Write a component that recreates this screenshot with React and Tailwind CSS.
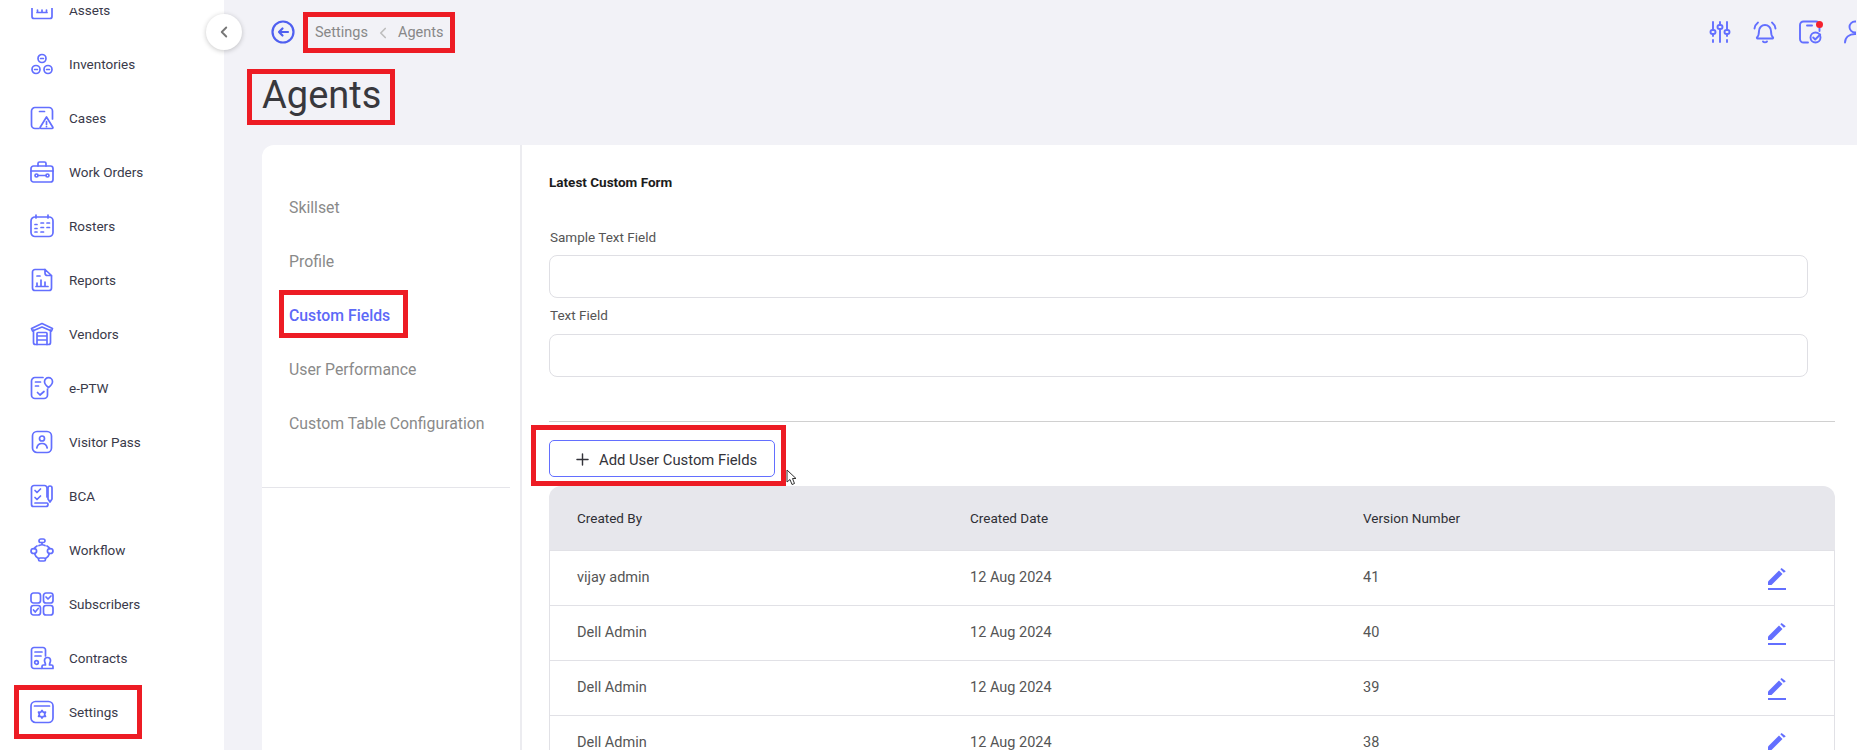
import { ChevronLeft, Plus } from "lucide-react";

const ICON = "#636fff";

// outline icons of the sidebar, all drawn on a 24 box
const Stroke = ({ children, width = 1.7 }) => (
  <svg viewBox="0 0 24 24" className="h-[24px] w-[24px] shrink-0" fill="none" stroke={ICON} strokeWidth={width} strokeLinecap="round" strokeLinejoin="round">
    {children}
  </svg>
);

const icons = {
  assets: (
    <>
      <path d="M2 -3v12.500a2 2 0 0 0 2 2h16a2 2 0 0 0 2-2V-3" transform="translate(0 9)" />
      <path d="M7 14.500h10M7.500 12v2.500M12 12v2.500M16.500 12v2.500" />
    </>
  ),
  inventories: (
    <>
      <circle cx="12" cy="6.500" r="4" />
      <circle cx="6" cy="17.500" r="4" />
      <circle cx="18" cy="17.500" r="4" />
      <path d="M10.600 6.500h2.800M4.600 17.500h2.800M16.600 17.500h2.800" />
    </>
  ),
  cases: (
    <>
      <path d="M9 22.500H5a3.500 3.500 0 0 1-3.500-3.500V5A3.500 3.500 0 0 1 5 1.500h14A3.500 3.500 0 0 1 22.500 5v8" />
      <path d="M9.500 5.500h5" />
      <path d="M16.500 11l6.300 10.300a.8.8 0 0 1-.7 1.200H10.900a.8.8 0 0 1-.7-1.200z" />
      <path d="M16.500 15.500v3M16.500 20.600v.1" />
    </>
  ),
  workOrders: (
    <>
      <rect x="1" y="6" width="22" height="16" rx="2.500" />
      <path d="M8 6V3.500A1.500 1.500 0 0 1 9.500 2h5A1.500 1.500 0 0 1 16 3.500V6M1 11h22" />
      <circle cx="6.500" cy="15.500" r="1.500" />
      <circle cx="17.500" cy="15.500" r="1.500" />
      <path d="M8 15.500h8" />
    </>
  ),
  rosters: (
    <>
      <rect x="1" y="3" width="22" height="19.500" rx="4" />
      <path d="M6 1v3M18 1v3M5 10.500h2M11 9h2.500M17 9h2.500M5 14.500h2M11 13.500h2.500M17 13.500h2.500M5 18h2M11 18h2.500" />
    </>
  ),
  reports: (
    <>
      <path d="M15 1.500H5a2.500 2.500 0 0 0-2.500 2.500v16A2.500 2.500 0 0 0 5 22.500h14a2.500 2.500 0 0 0 2.500-2.500V8" />
      <path d="M15 1.500V5a2.500 2.500 0 0 0 2.500 2.500h4z" />
      <path d="M7 18v-3M11 18v-6M15 18v-4M6 18.500h12M7 8h3" />
    </>
  ),
  vendors: (
    <>
      <path d="M3.500 8v12.500a2 2 0 0 0 2 2h13a2 2 0 0 0 2-2V8" />
      <path d="M1.500 6.500L12 1.500l10.500 5-1 2.500L12 5 2.500 9z" />
      <path d="M7 22.500V11.500a1 1 0 0 1 1-1h8a1 1 0 0 1 1 1v11M7 14h10M7 18h10" />
    </>
  ),
  eptw: (
    <>
      <path d="M13 1.500H5A3.500 3.500 0 0 0 1.500 5v14A3.500 3.500 0 0 0 5 22.500h9a3.500 3.500 0 0 0 3.500-3.500v-6" />
      <path d="M5.500 6h5M5.500 10h3M7.500 16.500l2.500 2.500 4-3.500" />
      <path d="M18.500 11.500c-2.500-2-4-3.700-4-5.800a4 4 0 0 1 8 0c0 2.100-1.500 3.800-4 5.800z" />
    </>
  ),
  visitor: (
    <>
      <rect x="2.500" y="1.500" width="19" height="21" rx="4.500" />
      <circle cx="12" cy="8.500" r="2.500" />
      <path d="M6.800 18c.5-3 2.500-4.500 5.200-4.500s4.700 1.500 5.200 4.500" />
    </>
  ),
  bca: (
    <>
      <path d="M17 13V4a2.500 2.500 0 0 0-2.500-2.500H4A2.500 2.500 0 0 0 1.500 4v16.500a2 2 0 0 0 2 2H16a2 2 0 0 0 2-2v-.5a1 1 0 0 0-1-1H5" />
      <path d="M5 6.500l2 2 3.500-3.500M5 13.500l2 2 3.500-3.500" />
      <path d="M20 18l-2-3V4a2 2 0 0 1 4 0v11z" />
    </>
  ),
  workflow: (
    <>
      <rect x="9" y="1" width="6" height="3.500" rx="1.750" />
      <rect x="8.500" y="20" width="7" height="3" rx="1.500" />
      <ellipse cx="3.800" cy="13" rx="2.800" ry="2.500" />
      <ellipse cx="20.200" cy="13" rx="2.800" ry="2.500" />
      <path d="M12 4.500v2M7 8c-1.500.8-2.500 1.800-3 2.800M17 8c1.500.8 2.500 1.800 3 2.800M9 7.500c2-1 4-1 6 0M4.500 15.500c.5 2 2 3.800 4 5M19.500 15.500c-.5 2-2 3.800-4 5" />
    </>
  ),
  subscribers: (
    <>
      <rect x="1" y="1" width="9.500" height="10" rx="2.500" />
      <rect x="13.500" y="1" width="9.500" height="10" rx="2.500" />
      <rect x="1" y="13.500" width="9.500" height="9.500" rx="2.500" />
      <rect x="13.500" y="13.500" width="9.500" height="9.500" rx="2.500" />
      <path d="M16 5l2 2 3-3M3.500 18l1.700 2 3-3.500" />
    </>
  ),
  contracts: (
    <>
      <path d="M11 22.500H4A2.500 2.500 0 0 1 1.500 20V4A2.500 2.500 0 0 1 4 1.500h9A2.500 2.500 0 0 1 15.500 4v6" />
      <path d="M5 6h7M5 10h6" />
      <circle cx="6.500" cy="16.500" r="1.800" />
      <path d="M17.500 11.500a3 3 0 0 1 3 3c0 1.500-1 2.500-1 4.500h2a1.500 1.500 0 0 1 1.500 1.500v2H12v-2a1.500 1.500 0 0 1 1.500-1.500h2c0-2-1-3-1-4.500a3 3 0 0 1 3-3z" />
    </>
  ),
  settings: (
    <>
      <rect x="1" y="1.500" width="22" height="21" rx="4.500" />
      <path d="M4.500 6h15" />
      <path d="M12 10.500l1.300 1.800 2.200-.2-.9 2.200.9 2.200-2.200-.2-1.300 1.800-1.300-1.800-2.200.2.900-2.200-.9-2.200 2.200.2z" />
    </>
  ),
};

const navItems = [
  ["Assets", "assets"],
  ["Inventories", "inventories"],
  ["Cases", "cases"],
  ["Work Orders", "workOrders"],
  ["Rosters", "rosters"],
  ["Reports", "reports"],
  ["Vendors", "vendors"],
  ["e-PTW", "eptw"],
  ["Visitor Pass", "visitor"],
  ["BCA", "bca"],
  ["Workflow", "workflow"],
  ["Subscribers", "subscribers"],
  ["Contracts", "contracts"],
  ["Settings", "settings"],
];

const tabs = ["Skillset", "Profile", "Custom Fields", "User Performance", "Custom Table Configuration"];

const rows = [
  ["vijay admin", "12 Aug 2024", "41"],
  ["Dell Admin", "12 Aug 2024", "40"],
  ["Dell Admin", "12 Aug 2024", "39"],
  ["Dell Admin", "12 Aug 2024", "38"],
];

const EditIcon = () => (
  <svg viewBox="0 0 18 22" className="h-[22px] w-[18px]" fill={ICON}>
    <path d="M0 17v-3.500L11 2.500l3.500 3.500L3.500 17z" />
    <path d="M12.300 1.300L13.600 0l4.200 3.300-2 1.500z" />
    <rect x="0" y="20" width="18" height="2" />
  </svg>
);

export default function App() {
  return (
    <div className="relative flex h-[750px] overflow-hidden bg-[#f2f2f7] font-['Roboto',sans-serif]">
      <aside className="w-[224px] shrink-0 overflow-hidden bg-white pt-[8px]">
        <div className="h-full overflow-hidden">
          <ul className="-mt-[25px]">
            {navItems.map(([label, icon]) => (
              <li key={label} className="flex h-[54px] items-center gap-[15px] pl-[30px] text-[13.500px] text-[#3a3a4a]">
                <Stroke>{icons[icon]}</Stroke>
                <span>{label}</span>
              </li>
            ))}
          </ul>
        </div>
      </aside>

      <main className="flex min-w-0 flex-1 flex-col">
        <header className="flex h-[64px] shrink-0 items-center pl-[47px]">
          <svg viewBox="0 0 24 24" className="h-[24px] w-[24px]" fill="none" stroke="#4f5ff0" strokeWidth="2.200" strokeLinecap="round" strokeLinejoin="round">
            <circle cx="12" cy="12" r="10.500" />
            <path d="M17 12H8M11.500 8.500L8 12l3.500 3.500" />
          </svg>
          <nav className="ml-[20px] flex items-center pt-[2px] text-[14.500px] text-[#888888]">
            <span>Settings</span>
            <ChevronLeft className="mx-[6px] h-[18px] w-[18px] text-[#bdbdbd]" strokeWidth={2.200} />
            <span>Agents</span>
          </nav>
          <div className="ml-auto flex items-center gap-[21px] pr-[1px]">
            <Stroke width={1.900}>
              <path d="M5 2v7M5 15v1M5 20v2M12 2v2M12 10v12M19 2v7M19 15v1M19 20v2" />
              <rect x="2.500" y="10" width="5" height="4" rx="2" />
              <rect x="9.500" y="5" width="5" height="4" rx="2" />
              <rect x="16.500" y="10" width="5" height="4" rx="2" />
            </Stroke>
            <Stroke width={1.900}>
              <path d="M4 17.500c1.500-1.500 2-3 2-6.500a6 6 0 0 1 12 0c0 3.500.5 5 2 6.500a.6.6 0 0 1-.5 1h-15a.6.6 0 0 1-.5-1z" />
              <path d="M10 21.500c1 1 3 1 4 0M1.500 8.500C2 6 3 4 5 2.500M22.500 8.500C22 6 21 4 19 2.500" />
            </Stroke>
            <div className="relative">
              <Stroke width={1.900}>
                <path d="M10 22.500H5.500A3.500 3.500 0 0 1 2 19V5a3.500 3.500 0 0 1 3.500-3.500H18A3.500 3.500 0 0 1 21.500 5v6" />
                <path d="M9 5.500h5" />
                <circle cx="17.500" cy="17.500" r="5" />
                <path d="M15.200 17.500l2 2 5-5" />
              </Stroke>
              <span className="absolute right-[-1px] top-[1px] h-[7px] w-[7px] rounded-full bg-[#f5222d]" />
            </div>
            <div className="w-[13px] overflow-hidden">
              <Stroke width={1.900}>
                <circle cx="12" cy="7" r="5.500" />
                <path d="M2 22.500c0-5 4-8.500 10-8.500s10 3.500 10 8.500" />
              </Stroke>
            </div>
          </div>
        </header>

        <h1 className="mb-[19px] flex h-[62px] shrink-0 items-center pl-[38px] text-[38px] font-normal text-[#38383d]">Agents</h1>

        <section className="ml-[38px] flex min-h-0 flex-1 rounded-tl-[12px] bg-white">
          <div className="w-[260px] shrink-0 border-r-2 border-[#ececf0]">
            <div className="mr-[10px] border-b border-[#e5e5ea] pb-[36px] pt-[36px]">
              {tabs.map((tab) => (
                <div
                  key={tab}
                  className={`flex h-[54px] items-center pl-[27px] text-[15.800px] ${tab === "Custom Fields" ? "font-medium text-[#5d69f7]" : "font-normal text-[#8a8a8a]"}`}
                >
                  {tab}
                </div>
              ))}
            </div>
          </div>

          <div className="min-w-0 flex-1 pl-[27px] pr-[22px] pt-[27px]">
            <h2 className="h-[20px] text-[13.500px] font-bold leading-[20px] text-[#1c1c1c]">Latest Custom Form</h2>

            <div className="mt-[35px] pr-[27px]">
              <label className="block pl-px text-[13.500px] leading-[20px] text-[#555555]">Sample Text Field</label>
              <div className="mt-[8px] h-[43px] rounded-[8px] border border-[#dfdfe4]" />
              <label className="mt-[7px] block pl-px text-[13.500px] leading-[20px] text-[#555555]">Text Field</label>
              <div className="mt-[9px] h-[43px] rounded-[8px] border border-[#dfdfe4]" />
            </div>

            <div className="mt-[44px] border-t border-[#d0d0d0]" />

            <button className="mt-[18px] flex h-[37px] w-[226px] items-center rounded-[5px] border border-[#636fff] pl-[23px] pt-[3px] text-[14.800px] text-[#33333a]">
              <Plus className="mb-[2px] mr-[7px] h-[19px] w-[19px]" strokeWidth={1.800} />
              Add User Custom Fields
            </button>

            <div className="mt-[9px] overflow-hidden rounded-t-[12px]">
              <div className="grid h-[65px] grid-cols-[393px_393px_1fr_86px] items-center border-b border-[#e1e1e6] bg-[#e7e7ec] pl-[28px] text-[13.500px] text-[#2f2f35]">
                <span>Created By</span>
                <span>Created Date</span>
                <span>Version Number</span>
              </div>
              {rows.map(([by, date, version]) => (
                <div
                  key={version}
                  className="grid h-[55px] grid-cols-[393px_393px_1fr_86px] items-center border-x border-b border-[#e1e1e6] pb-[1px] pl-[27px] text-[14.500px] text-[#555555]"
                >
                  <span>{by}</span>
                  <span>{date}</span>
                  <span>{version}</span>
                  <span className="flex pl-[20px] pt-[2px]">
                    <EditIcon />
                  </span>
                </div>
              ))}
            </div>
          </div>
        </section>
      </main>

      <button className="absolute left-[206px] top-[14px] flex h-[36px] w-[36px] items-center justify-center rounded-full bg-white shadow-[0_1px_5px_rgba(0,0,0,0.22)]">
        <ChevronLeft className="h-[18px] w-[18px] text-[#777777]" strokeWidth={2.500} />
      </button>

      {/* red annotation boxes drawn over the screenshot */}
      <div className="absolute left-[14px] top-[685px] h-[54px] w-[128px] border-[5px] border-[#ed1c24]" />
      <div className="absolute left-[303px] top-[12px] h-[41px] w-[152px] border-[5px] border-[#ed1c24]" />
      <div className="absolute left-[247px] top-[69px] h-[56px] w-[148px] border-[5px] border-[#ed1c24]" />
      <div className="absolute left-[279px] top-[290px] h-[48px] w-[129px] border-[5px] border-[#ed1c24]" />
      <div className="absolute left-[531px] top-[425px] h-[61px] w-[255px] border-[5px] border-[#ed1c24]" />

      <svg viewBox="0 0 12 18" className="absolute left-[786px] top-[469px] h-[18px] w-[12px]" fill="#ffffff" stroke="#333333" strokeWidth="1">
        <path d="M1 1v12l3-2.500 2 5 2.500-1-2-5H10z" />
      </svg>
    </div>
  );
}
